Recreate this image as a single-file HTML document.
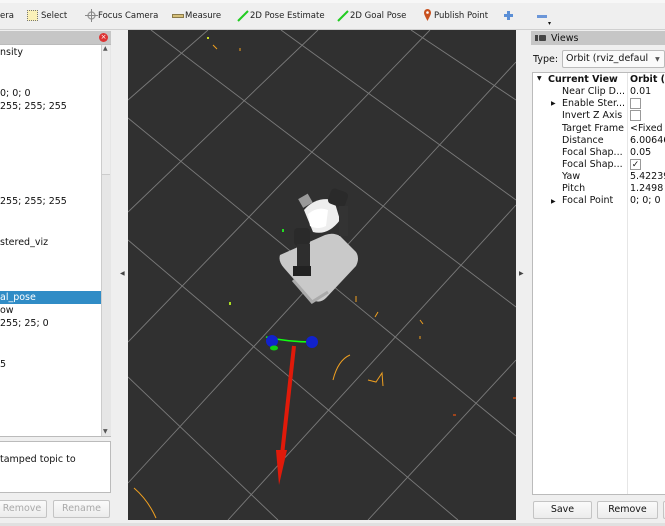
<!DOCTYPE html>
<html><head><meta charset="utf-8"><style>
*{margin:0;padding:0;box-sizing:border-box}
body{width:665px;height:526px;overflow:hidden;background:#efefef;font-family:"DejaVu Sans","Liberation Sans",sans-serif;font-size:9.5px;color:#111;position:relative}
.a{position:absolute;white-space:nowrap}
.tb{font-size:8.5px;top:11px;color:#222}
.btn{position:absolute;border:1px solid #c4c4c4;border-radius:2px;background:linear-gradient(#fafafa,#ececec);text-align:center;line-height:16px;font-size:9.5px}
</style></head><body>
<div class="a" style="left:0;top:0;width:665px;height:3px;background:#f7f7f7"></div>
<div class="a tb" style="left:0">era</div>
<div class="a" style="left:27px;top:10px;width:11px;height:11px;background:#fbf1b8;border:1px dotted #777"></div>
<div class="a tb" style="left:41px">Select</div>
<svg class="a" style="left:85px;top:9px" width="13" height="13" viewBox="0 0 13 13"><circle cx="6.5" cy="6.5" r="3.5" fill="none" stroke="#999" stroke-width="1.3"/><path d="M6.5 0v13M0 6.5h13" stroke="#888" stroke-width="1"/></svg>
<div class="a tb" style="left:98px">Focus Camera</div>
<div class="a" style="left:172px;top:14px;width:12px;height:4px;background:#d6c07a;border:1px solid #8a7a4a"></div>
<div class="a tb" style="left:185px">Measure</div>
<svg class="a" style="left:237px;top:10px" width="12" height="12"><path d="M1 11L11 1" stroke="#2c2" stroke-width="2"/></svg>
<div class="a tb" style="left:250px">2D Pose Estimate</div>
<svg class="a" style="left:337px;top:10px" width="12" height="12"><path d="M1 11L11 1" stroke="#2c2" stroke-width="2"/></svg>
<div class="a tb" style="left:350px">2D Goal Pose</div>
<svg class="a" style="left:423px;top:8px" width="9" height="14"><path d="M4.5 13C2 8 1 6.5 1 4.5A3.5 3.5 0 0 1 8 4.5C8 6.5 7 8 4.5 13z" fill="#c8501e"/><circle cx="4.5" cy="4.5" r="1.3" fill="#fff"/></svg>
<div class="a tb" style="left:434px">Publish Point</div>
<svg class="a" style="left:503px;top:10px" width="11" height="11"><path d="M5.5 1v9M1 5.5h9" stroke="#5b8fd6" stroke-width="3"/></svg>
<div class="a" style="left:537px;top:15px;width:10px;height:3px;background:#6b96d8"></div>
<div class="a" style="left:548px;top:20px;font-size:6px">▾</div>
<div class="a" style="left:0;top:29px;width:665px;height:1px;background:#d0d0d0"></div>

<div class="a" style="left:0;top:31px;width:111px;height:13px;background:#c6c6c6"></div>
<div class="a" style="left:99px;top:33px;width:9px;height:9px;border-radius:50%;background:#d33;color:#fff;font-size:7px;line-height:9px;text-align:center">×</div>
<div class="a" style="left:0;top:44px;width:111px;height:393px;background:#fff;border:1px solid #bbb;border-left:none"></div>
<div class="a" style="left:101px;top:45px;width:10px;height:391px;background:#e6e6e6;border-left:1px solid #ccc"></div>
<div class="a" style="left:102px;top:45px;width:8px;height:130px;background:#ededed;border-bottom:1px solid #ccc"></div>
<div class="a" style="left:103px;top:45px;font-size:6px;color:#555">▲</div>
<div class="a" style="left:103px;top:428px;font-size:6px;color:#555">▼</div>
<div class="a" style="left:0;top:291px;width:101px;height:13px;background:#308cc6"></div>
<div class="a" style="left:0;top:47px">nsity</div>
<div class="a" style="left:0;top:88px">0; 0; 0</div>
<div class="a" style="left:0;top:101px">255; 255; 255</div>
<div class="a" style="left:0;top:196px">255; 255; 255</div>
<div class="a" style="left:0;top:237px">stered_viz</div>
<div class="a" style="left:0;top:292px;color:#fff">al_pose</div>
<div class="a" style="left:0;top:305px">ow</div>
<div class="a" style="left:0;top:318px">255; 25; 0</div>
<div class="a" style="left:0;top:359px">5</div>
<div class="a" style="left:0;top:441px;width:111px;height:52px;background:#fff;border:1px solid #bbb;border-left:none"></div>
<div class="a" style="left:0;top:454px">tamped topic to</div>
<div class="btn" style="left:-3px;top:500px;width:50px;height:18px;color:#aaa">Remove</div>
<div class="btn" style="left:53px;top:500px;width:57px;height:18px;color:#aaa">Rename</div>
<div class="a" style="left:120px;top:270px;font-size:6px;color:#444">◀</div>

<svg class="a" style="left:128px;top:30px;background:#303030" width="388" height="490" viewBox="0 0 388 490">
<g stroke="#7a7a7a" stroke-width="0.9" fill="none">
<path d="M23 0L388 277"/>
<path d="M0 88L388 406"/>
<path d="M0 210L330 490"/>
<path d="M0 347L150 490"/>
<path d="M153 0L388 170"/>
<path d="M283 0L388 70"/>
<path d="M0 70L80 0"/>
<path d="M0 182L190 0"/>
<path d="M0 312L302 0"/>
<path d="M0 453L388 32"/>
<path d="M100 490L388 175"/>
<path d="M240 490L388 330"/>
</g>
<path d="M152 225 L197 205 Q205 202 212 206 L228 222 Q232 228 228 236 L198 268 Q192 274 184 270 L156 238 Q150 231 152 225z" fill="#c9c9c9"/>
<path d="M165 250 L184 272 L200 262" stroke="#aaa" stroke-width="3" fill="none"/>
<path d="M176 180 Q188 166 206 170 L212 190 Q200 206 185 202z" fill="#eee"/>
<path d="M180 184 Q190 176 200 180 L198 196 Q190 200 182 196z" fill="#fff"/>
<rect x="172" y="166" width="11" height="10" fill="#9a9a9a" transform="rotate(-30 177 171)"/>
<rect x="201" y="160" width="18" height="16" rx="4" fill="#2a2a2a" transform="rotate(20 210 168)"/>
<rect x="211" y="176" width="9" height="30" fill="#333"/>
<rect x="166" y="198" width="16" height="18" rx="4" fill="#2a2a2a"/>
<rect x="169" y="214" width="13" height="24" fill="#2e2e2e"/>
<rect x="165" y="236" width="18" height="10" fill="#222"/>
<path d="M138 307 Q160 312 185 312" stroke="#1f1" stroke-width="1.5" fill="none"/>
<circle cx="144" cy="311" r="6" fill="#12c"/>
<circle cx="184" cy="312" r="6" fill="#12c"/>
<ellipse cx="146" cy="318" rx="4" ry="2.5" fill="#1c1"/>
<path d="M166 316 L154 425" stroke="#e01a0a" stroke-width="4"/>
<path d="M148 420 L159 420 L151 455z" fill="#e01a0a"/>
<g stroke="#f0a020" stroke-width="1" fill="none">
<path d="M205 350 Q210 330 222 325"/>
<path d="M240 350 L248 352 L254 343 L255 356"/>
<path d="M6 458 Q20 470 28 488"/>
<path d="M250 282 L247 287M292 290 L295 294M292 306v3M85 15 L89 19M112 18v3M228 266 v6"/>
</g>
<path d="M325 385h3M385 368h3" stroke="#e05010" stroke-width="1.2"/>
<rect x="154" y="199" width="2" height="3" fill="#2d2"/>
<rect x="101" y="272" width="2" height="3" fill="#ad2"/>
<rect x="79" y="7" width="2" height="2" fill="#cd2"/>
</svg>
<div class="a" style="left:519px;top:270px;font-size:6px;color:#444">▶</div>

<div class="a" style="left:531px;top:31px;width:134px;height:14px;background:#c6c6c6"></div>
<div class="a" style="left:535px;top:35px;width:3px;height:6px;background:#444"></div>
<div class="a" style="left:539px;top:35px;width:7px;height:6px;background:#444;border-radius:1px"></div>
<div class="a" style="left:551px;top:33px">Views</div>
<div class="a" style="left:533px;top:54px">Type:</div>
<div class="a" style="left:562px;top:50px;width:103px;height:18px;border:1px solid #bbb;border-radius:2px;background:#fafafa;padding:2px 0 0 3px">Orbit (rviz_defaul <span style="font-size:6px;color:#555;margin-left:4px">▼</span></div>
<div class="a" style="left:532px;top:72px;width:133px;height:423px;background:#fff;border:1px solid #bbb;border-right:none"></div>
<div class="a" style="left:627px;top:73px;width:1px;height:421px;background:#e6e6e6"></div>
<div class="a" style="left:537px;top:75px;font-size:6px">▼</div>
<div class="a" style="left:548px;top:74px;font-weight:bold">Current View</div>
<div class="a" style="left:630px;top:74px;font-weight:bold">Orbit (r</div>
<div class="a" style="left:562px;top:86px">Near Clip D...</div><div class="a" style="left:630px;top:86px">0.01</div>
<div class="a" style="left:551px;top:100px;font-size:6px">▶</div>
<div class="a" style="left:562px;top:98px">Enable Ster...</div><div class="a" style="left:630px;top:98px;width:11px;height:11px;border:1px solid #999"></div>
<div class="a" style="left:562px;top:110px">Invert Z Axis</div><div class="a" style="left:630px;top:110px;width:11px;height:11px;border:1px solid #999"></div>
<div class="a" style="left:562px;top:123px">Target Frame</div><div class="a" style="left:630px;top:123px">&lt;Fixed</div>
<div class="a" style="left:562px;top:135px">Distance</div><div class="a" style="left:630px;top:135px">6.00646</div>
<div class="a" style="left:562px;top:147px">Focal Shap...</div><div class="a" style="left:630px;top:147px">0.05</div>
<div class="a" style="left:562px;top:159px">Focal Shap...</div><div class="a" style="left:630px;top:159px;width:11px;height:11px;border:1px solid #999;font-size:9px;line-height:10px;text-align:center">✓</div>
<div class="a" style="left:562px;top:171px">Yaw</div><div class="a" style="left:630px;top:171px">5.42239</div>
<div class="a" style="left:562px;top:183px">Pitch</div><div class="a" style="left:630px;top:183px">1.2498</div>
<div class="a" style="left:551px;top:198px;font-size:6px">▶</div>
<div class="a" style="left:562px;top:195px">Focal Point</div><div class="a" style="left:630px;top:195px">0; 0; 0</div>
<div class="btn" style="left:533px;top:501px;width:59px;height:18px">Save</div>
<div class="btn" style="left:597px;top:501px;width:61px;height:18px">Remove</div>
<div class="btn" style="left:663px;top:501px;width:10px;height:18px"></div>
<div class="a" style="left:0;top:523px;width:665px;height:3px;background:#e0e0e0"></div>
</body></html>
